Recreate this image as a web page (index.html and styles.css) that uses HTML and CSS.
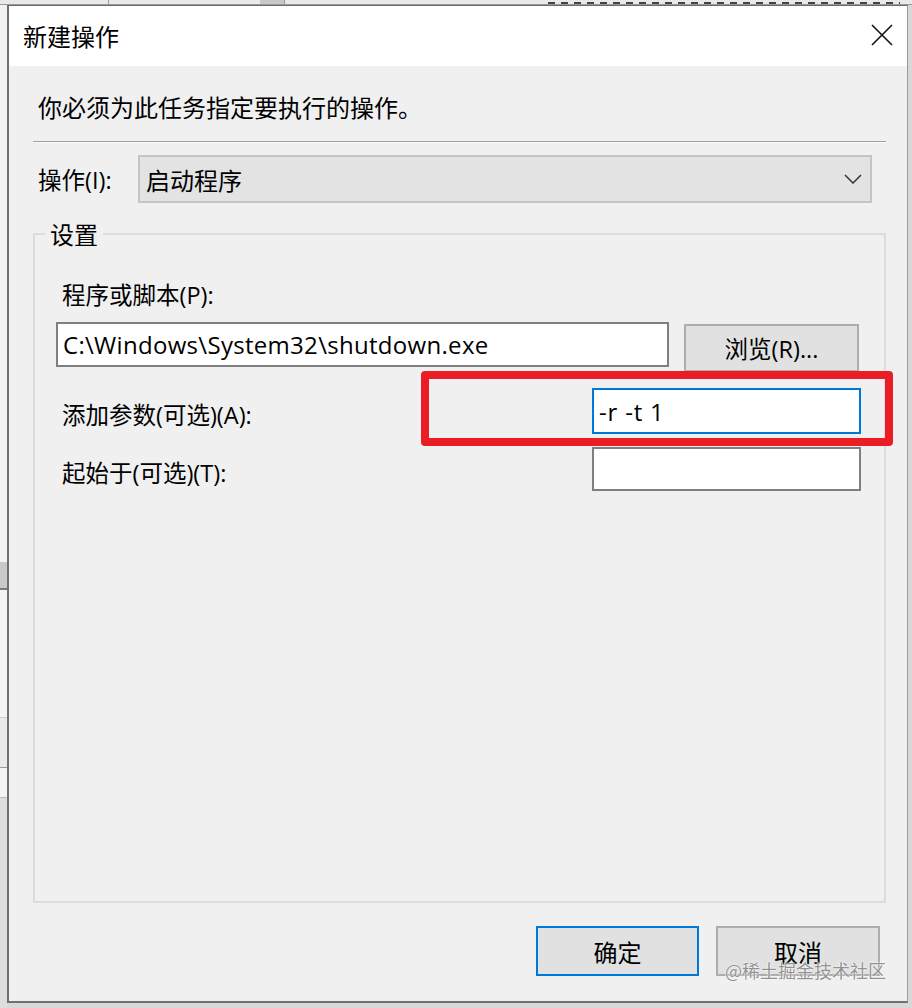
FILE: index.html
```html
<!DOCTYPE html>
<html lang="zh-CN">
<head>
<meta charset="utf-8">
<title>新建操作</title>
<link rel="stylesheet" href="styles.css">
</head>
<body>
<div class="screen">
  <div class="bg-top">
    <span class="bg-tick t1"></span>
    <span class="bg-tick t2"></span>
    <span class="bg-tick t3"></span>
    <span class="bg-dashes"></span>
  </div>
  <div class="bg-left">
    <div class="bl-a"></div>
    <div class="bl-b"></div>
    <div class="bl-c"></div>
    <div class="bl-d"></div>
    <div class="bl-e"></div>
    <div class="bl-f"></div>
  </div>
  <div class="window">
    <div class="titlebar">
      <span class="title">新建操作</span>
      <svg class="close" width="22" height="22" viewBox="0 0 22 22"><path d="M1 1 L21 21 M21 1 L1 21" stroke="#111" stroke-width="1.6" fill="none"/></svg>
    </div>
    <div class="body">
      <div class="intro">你必须为此任务指定要执行的操作。</div>
      <div class="separator"></div>
      <div class="combo-row">
        <span class="combo-label">操作(I):</span>
        <div class="combo">
          <span>启动程序</span>
          <svg width="18" height="10" viewBox="0 0 18 10"><path d="M1 1 L9 9 L17 1" stroke="#333" stroke-width="1.5" fill="none"/></svg>
        </div>
      </div>
      <fieldset class="group">
        <legend>设置</legend>
        <div class="group-inner">
          <div class="field-label">程序或脚本(P):</div>
          <div class="prog-row">
            <div class="textbox prog">C:\Windows\System32\shutdown.exe</div>
            <div class="button browse">浏览(R)...</div>
          </div>
          <div class="opt-row args-row">
            <span class="field-label opt-label">添加参数(可选)(A):</span>
            <div class="textbox opt focused">-r -t 1</div>
          </div>
          <div class="opt-row start-row">
            <span class="field-label opt-label">起始于(可选)(T):</span>
            <div class="textbox opt"></div>
          </div>
        </div>
      </fieldset>
      <div class="buttons">
        <div class="button ok">确定</div>
        <div class="button cancel">取消</div>
      </div>
    </div>
  </div>
  <div class="highlight"></div>
  <div class="watermark">@稀土掘金技术社区</div>
</div>
</body>
</html>
```
FILE: styles.css
```css
* { box-sizing: border-box; }
html, body { margin: 0; padding: 0; }
body {
  width: 912px;
  height: 1008px;
  overflow: hidden;
  font-family: "Open Sans", "Noto Sans CJK SC", sans-serif;
  color: #000;
}
.screen {
  position: relative;
  width: 912px;
  height: 1008px;
  display: grid;
  grid-template-columns: 7px 901px 4px;
  grid-template-rows: 5px 998px 5px;
  background: #d8d8d8;
}
.bg-top {
  grid-column: 1 / 4;
  grid-row: 1;
  background: #e9e9e9;
  border-bottom: 1px solid #9a9a9a;
  position: relative;
  overflow: hidden;
}
.bg-tick { position: absolute; top: 0; width: 1px; height: 5px; background: #9a9a9a; }
.t1 { left: 108px; }
.t2 { left: 260px; background: #c8c8c8; width: 24px; }
.t3 { left: 284px; }
.bg-dashes {
  position: absolute;
  left: 548px;
  top: 2px;
  width: 352px;
  height: 2px;
  background: repeating-linear-gradient(90deg, #444 0 7px, transparent 7px 13px);
}
.bg-left {
  grid-column: 1;
  grid-row: 2 / 4;
  display: flex;
  flex-direction: column;
  background: #f4f4f4;
}
.bl-a { height: 557px; background: #f2f2f2; }
.bl-b { height: 28px; background: #c9c9c9; border-bottom: 2px solid #7a7a7a; }
.bl-c { height: 128px; background: #f4f4f4; border-bottom: 1px solid #cfcfcf; }
.bl-d { height: 50px; background: #e9e9e9; border-bottom: 1px solid #9a9a9a; }
.bl-e { height: 30px; background: #f4f4f4; border-bottom: 1px solid #bcbcbc; }
.bl-f { flex: 1; background: #dedede; }

.window {
  grid-column: 2;
  grid-row: 2;
  display: flex;
  flex-direction: column;
  background: #f0f0f0;
  border-top: 1px solid #6a6a6a;
  border-left: 2px solid #6f6f6f;
  border-bottom: 2px solid #6f6f6f;
  border-right: 1px solid #9a9a9a;
}
.titlebar {
  height: 60px;
  flex: none;
  background: #fff;
  display: flex;
  align-items: center;
  justify-content: space-between;
  padding: 0 14px 0 14px;
}
.title { font-size: 24px; line-height: 30px; font-family: "Noto Sans CJK SC", sans-serif; }
.close { display: block; margin-top: -2px; }

.body {
  flex: 1;
  display: flex;
  flex-direction: column;
  padding: 26px 21px 25px 24px;
}
.intro {
  font-size: 24px;
  line-height: 30px;
  padding-left: 5px;
  font-family: "Noto Sans CJK SC", sans-serif;
}
.separator {
  margin-top: 19px;
  height: 2px;
  background: #a0a0a0;
  border-bottom: 1px solid #fafafa;
}
.combo-row {
  margin-top: 12px;
  display: flex;
  align-items: center;
  padding-right: 14px;
}
.combo-label {
  width: 105px;
  padding-left: 5px;
  font-size: 23.5px;
  line-height: 30px;
  padding-top: 2px;
}
.combo {
  flex: 1;
  height: 48px;
  background: #e3e3e3;
  border: 2px solid #c4c4c4;
  display: flex;
  align-items: center;
  justify-content: space-between;
  padding: 0 8px 0 6px;
}
.combo span { font-family: "Noto Sans CJK SC", sans-serif; font-size: 24px; }

.group {
  flex: 1;
  margin: 16px 0 0 0;
  padding: 0;
  min-width: 0;
  border: 2px solid #dcdcdc;
}
.group legend {
  margin-left: 10px;
  padding: 0 5px;
  font-size: 24px;
  line-height: 30px;
  font-family: "Noto Sans CJK SC", sans-serif;
}
.group-inner {
  padding: 31px 0 0 21px;
  display: flex;
  flex-direction: column;
}
.field-label {
  font-size: 23.5px;
  line-height: 30px;
  padding-left: 6px;
}
.prog-row {
  margin-top: 12px;
  display: flex;
  align-items: flex-start;
  gap: 15px;
}
.textbox {
  background: #fff;
  border: 2px solid #7f7f7f;
  font-size: 24px;
  letter-spacing: 0.3px;
  display: flex;
  align-items: center;
  padding-left: 5px;
}
.prog { width: 613px; height: 45px; }
.button {
  display: flex;
  align-items: center;
  justify-content: center;
  background: #e1e1e1;
  border: 2px solid #adadad;
  font-size: 23.5px;
}
.browse { width: 175px; height: 48px; margin-top: 2px; }
.opt-row {
  display: flex;
  align-items: center;
}
.args-row { margin-top: 16px; }
.start-row { margin-top: 13px; }
.opt-label { width: 536px; padding-top: 8px; }
.opt { width: 269px; height: 46px; letter-spacing: 0.8px; }
.start-row .opt { height: 44px; }
.focused { border-color: #0078d7; }

.buttons {
  margin-top: 23px;
  display: flex;
  justify-content: flex-end;
  gap: 17px;
  padding-right: 6px;
}
.ok, .cancel { height: 50px; font-family: "Noto Sans CJK SC", sans-serif; font-size: 24px; }
.ok { width: 163px; border-color: #0078d7; }
.cancel { width: 164px; }

.highlight {
  position: absolute;
  left: 421px;
  top: 371px;
  width: 472px;
  height: 75px;
  border: 8px solid #ea1c24;
  border-radius: 4px;
}
.watermark {
  position: absolute;
  left: 725px;
  top: 958px;
  font-family: "Noto Sans CJK SC", sans-serif;
  font-size: 18px;
  line-height: 24px;
  color: rgba(110, 110, 110, 0.75);
  text-shadow: 0 0 2px #fff, 0 0 1px #fff;
}
```
